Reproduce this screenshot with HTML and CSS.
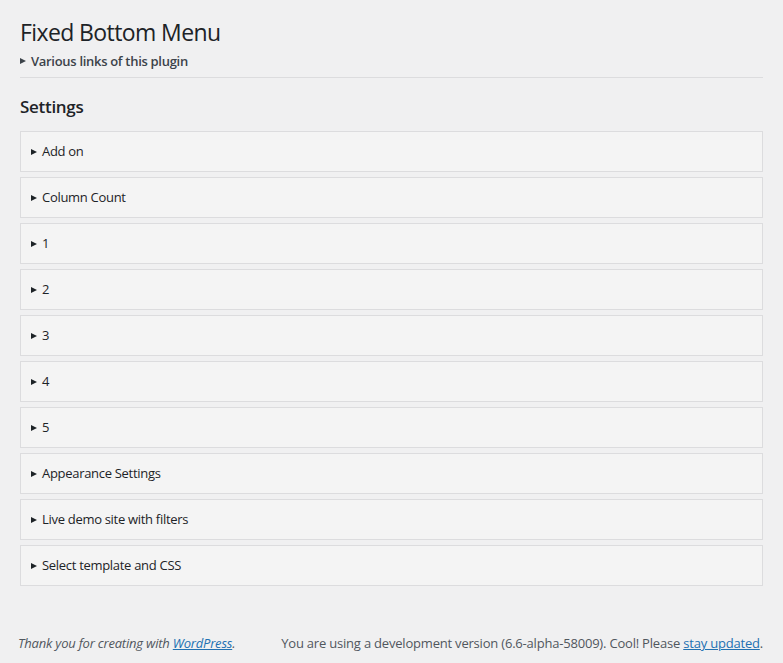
FILE: index.html
```html
<!DOCTYPE html>
<html lang="en">
<head>
<meta charset="utf-8">
<title>Fixed Bottom Menu</title>
<link rel="stylesheet" href="styles.css">
</head>
<body>
<div class="page">
  <div class="wrap">
    <h1 class="page-title">Fixed Bottom Menu</h1>
    <details class="plugin-links">
      <summary>Various links of this plugin</summary>
    </details>
    <hr class="divider">
    <h2 class="section-title">Settings</h2>
    <div class="panels">
      <details class="panel"><summary>Add on</summary></details>
      <details class="panel"><summary>Column Count</summary></details>
      <details class="panel"><summary>1</summary></details>
      <details class="panel"><summary>2</summary></details>
      <details class="panel"><summary>3</summary></details>
      <details class="panel"><summary>4</summary></details>
      <details class="panel"><summary>5</summary></details>
      <details class="panel"><summary>Appearance Settings</summary></details>
      <details class="panel"><summary>Live demo site with filters</summary></details>
      <details class="panel"><summary>Select template and CSS</summary></details>
    </div>
  </div>
  <footer class="footer">
    <p class="footer-thanks">Thank you for creating with <a href="#">WordPress</a>.</p>
    <p class="footer-version">You are using a development version (6.6-alpha-58009). Cool! Please <a href="#">stay updated</a>.</p>
  </footer>
</div>
</body>
</html>
```

FILE: styles.css
```css
html, body {
  margin: 0;
  padding: 0;
  background: #f0f0f1;
}

body {
  font-family: "Open Sans", "Noto Sans", sans-serif;
  font-size: 13px;
  line-height: 1.4;
  color: #1d2327;
}

.page {
  display: flex;
  flex-direction: column;
  min-height: 663px;
}

.wrap {
  padding: 18px 20px 0 20px;
}

.page-title {
  font-size: 23px;
  font-weight: 400;
  letter-spacing: -0.6px;
  line-height: 29px;
  margin: 0 0 5px 0;
  color: #1d2327;
}

/* disclosure rows: small solid triangle before the label */
summary {
  list-style: none;
  display: flex;
  align-items: center;
  gap: 5px;
  cursor: pointer;
}

summary::-webkit-details-marker {
  display: none;
}

summary::before {
  content: "";
  width: 0;
  height: 0;
  border-left: 6px solid #1d2327;
  border-top: 3.5px solid transparent;
  border-bottom: 3.5px solid transparent;
  flex: none;
}

.plugin-links summary {
  font-weight: 600;
  color: #3c434a;
  font-size: 13px;
  line-height: 18px;
  letter-spacing: -0.3px;
}

.plugin-links summary::before {
  border-left-color: #3c434a;
}

.divider {
  border: 0;
  border-top: 1px solid #dcdcde;
  margin: 7px 0 0 0;
  height: 0;
}

.section-title {
  font-size: 17px;
  font-weight: 600;
  letter-spacing: -0.3px;
  line-height: 22px;
  margin: 18px 0 13px 0;
  color: #1d2327;
}

.panels {
  display: flex;
  flex-direction: column;
  gap: 5px;
}

.panel {
  background: #f4f4f4;
  border: 1px solid #dcdcde;
  height: 41px;
  box-sizing: border-box;
}

.panel summary {
  padding: 10px 10px;
  line-height: 19px;
  color: #1d2327;
  letter-spacing: -0.3px;
}

.footer {
  margin-top: auto;
  display: flex;
  justify-content: space-between;
  align-items: baseline;
  padding: 0 20px 10px 18px;
  color: #50575e;
  letter-spacing: -0.2px;
}

.footer p {
  margin: 0;
  line-height: 19px;
}

.footer-thanks {
  font-style: italic;
}

.footer a {
  color: #2271b1;
}
```
